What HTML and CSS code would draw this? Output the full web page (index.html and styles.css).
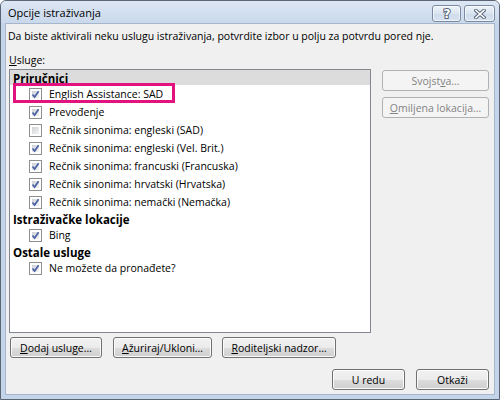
FILE: index.html
```html
<!DOCTYPE html>
<html lang="sr-Latn">
<head>
<meta charset="utf-8">
<title>Opcije istraživanja</title>
<link rel="stylesheet" href="styles.css">
</head>
<body>
<div class="window">
  <div class="titlebar">
    <span class="title">Opcije istraživanja</span>
    <div class="caption-buttons">
      <button class="caption-btn help" type="button" aria-label="Pomoć">
        <svg width="12" height="13" viewBox="0 0 12 13"><text x="6" y="11" text-anchor="middle" class="help-glyph">?</text></svg>
      </button>
      <button class="caption-btn close" type="button" aria-label="Zatvori">
        <svg width="12" height="10" viewBox="0 0 12 10">
          <path d="M2 1.5 L10 8.5 M10 1.5 L2 8.5" class="x-outline"/>
          <path d="M2 1.5 L10 8.5 M10 1.5 L2 8.5" class="x-fill"/>
        </svg>
      </button>
    </div>
  </div>

  <div class="client">
    <p class="intro">Da biste aktivirali neku uslugu istraživanja, potvrdite izbor u polju za potvrdu pored nje.</p>
    <div class="field-label"><u>U</u>sluge:</div>

    <div class="main-row">
      <div class="listbox">
        <div class="group-head active">Priručnici</div>
        <div class="item"><span class="check on"></span>English Assistance: SAD</div>
        <div class="item"><span class="check on"></span>Prevođenje</div>
        <div class="item"><span class="check"></span>Rečnik sinonima: engleski (SAD)</div>
        <div class="item"><span class="check on"></span>Rečnik sinonima: engleski (Vel. Brit.)</div>
        <div class="item"><span class="check on"></span>Rečnik sinonima: francuski (Francuska)</div>
        <div class="item"><span class="check on"></span>Rečnik sinonima: hrvatski (Hrvatska)</div>
        <div class="item"><span class="check on"></span>Rečnik sinonima: nemački (Nemačka)</div>
        <div class="group-head">Istraživačke lokacije</div>
        <div class="item"><span class="check on"></span>Bing</div>
        <div class="group-head">Ostale usluge</div>
        <div class="item"><span class="check on"></span>Ne možete da pronađete?</div>
        <div class="callout"></div>
      </div>

      <div class="side-buttons">
        <button class="btn side" type="button" disabled>Svojst<u>v</u>a…</button>
        <button class="btn side" type="button" disabled><u>O</u>miljena lokacija…</button>
      </div>
    </div>

    <div class="service-buttons">
      <button class="btn add" type="button"><u>D</u>odaj usluge…</button>
      <button class="btn update" type="button"><u>A</u>žuriraj/Ukloni…</button>
      <button class="btn parental" type="button"><u>R</u>oditeljski nadzor…</button>
    </div>

    <div class="dialog-buttons">
      <button class="btn dlg" type="button">U redu</button>
      <button class="btn dlg" type="button">Otkaži</button>
    </div>
  </div>
</div>
</body>
</html>
```

FILE: styles.css
```css
* {
  box-sizing: border-box;
}

html,
body {
  margin: 0;
  padding: 0;
}

body {
  width: 500px;
  height: 400px;
  overflow: hidden;
  font-family: "Open Sans", "Liberation Sans", sans-serif;
  font-size: 10.5px;
  color: #000;
  background: #fff;
}

/* Window frame */
.window {
  width: 500px;
  height: 400px;
  display: flex;
  flex-direction: column;
  border: 1px solid #5c6573;
  border-radius: 6px 6px 0 0;
  background: #c5d5e9;
  padding: 0 4px 4px 4px;
}

.titlebar {
  height: 22px;
  flex: none;
  margin: 0 -4px;
  padding: 0 4px 0 7px;
  display: flex;
  align-items: flex-start;
  justify-content: space-between;
  background: linear-gradient(#dde7f4, #c9d8eb);
  border-radius: 5px 5px 0 0;
}

.title {
  padding-top: 4px;
  font-size: 11px;
  color: #000;
}

.caption-buttons {
  display: flex;
  gap: 3px;
  padding-top: 4px;
}

.caption-btn {
  height: 17px;
  padding: 0;
  border: 1px solid #7a8aa2;
  border-radius: 3px;
  background: linear-gradient(#eef3f9, #dbe5f1 50%, #cfdcec 51%, #d8e3f0);
  display: flex;
  align-items: center;
  justify-content: center;
  box-shadow: inset 0 0 0 1px rgba(255, 255, 255, 0.6);
}

.caption-btn.help {
  width: 29px;
}

.caption-btn.close {
  width: 31px;
}

.help-glyph {
  font-family: "DejaVu Sans", sans-serif;
  font-weight: bold;
  font-size: 12px;
  fill: #fff;
  stroke: #5a677b;
  stroke-width: 2px;
  paint-order: stroke;
}

.x-outline {
  stroke: #5a677b;
  stroke-width: 3.6;
  stroke-linecap: square;
  fill: none;
}

.x-fill {
  stroke: #fff;
  stroke-width: 1.6;
  stroke-linecap: square;
  fill: none;
}

/* Client area */
.client {
  flex: 1;
  border: 1px solid #a7b6ca;
  background: #f0f0f0;
  padding: 4px 5px 0 3px;
  display: flex;
  flex-direction: column;
}

.intro {
  margin: 0 0 0 -1px;
  line-height: 16px;
  height: 16px;
  white-space: nowrap;
}

.field-label {
  margin-top: 8px;
  line-height: 16px;
  height: 16px;
}

.main-row {
  margin-top: 1px;
  display: flex;
  align-items: flex-start;
}

/* Services list */
.listbox {
  position: relative;
  width: 362px;
  height: 264px;
  border: 1px solid #828790;
  background: #fff;
}

.group-head {
  height: 15px;
  line-height: 15px;
  padding: 1px 0 0 3px;
  font-weight: bold;
  font-size: 11.5px;
  white-space: nowrap;
}

.group-head.active {
  background: #dcdcdc;
}

.item {
  height: 18px;
  display: flex;
  align-items: center;
  padding-left: 19px;
  white-space: nowrap;
}

.check {
  width: 13px;
  height: 13px;
  margin-right: 7px;
  flex: none;
  border: 1px solid #8f8f8f;
  background: #fff;
  position: relative;
}

.check::before {
  content: "";
  position: absolute;
  inset: 2px;
  background: linear-gradient(135deg, #cfd2d6, #f4f4f4);
}

.check.on::after {
  content: "";
  position: absolute;
  left: 1px;
  top: 1px;
  width: 9px;
  height: 9px;
  background: no-repeat center / 9px 9px
    url("data:image/svg+xml,%3Csvg xmlns='http://www.w3.org/2000/svg' viewBox='0 0 9 9'%3E%3Cpath d='M1.5 4.5 L3.6 7 L7.6 1.3' fill='none' stroke='%234a61a6' stroke-width='1.7'/%3E%3C/svg%3E");
}

/* Highlight frame around the first service */
.callout {
  position: absolute;
  left: 3px;
  top: 13px;
  width: 162px;
  height: 20px;
  border: 3px solid #e2137f;
  pointer-events: none;
}

/* Buttons */
.btn {
  height: 21px;
  padding: 0;
  font: inherit;
  color: #000;
  text-align: center;
  border: 1px solid #707070;
  border-radius: 3px;
  background: linear-gradient(#f2f2f2 0%, #ebebeb 50%, #dddddd 51%, #cfcfcf 100%);
  box-shadow: inset 0 0 0 1px #fbfbfb;
}

.btn:disabled {
  color: #838383;
  border-color: #adb2b5;
  background: #f4f4f4;
  box-shadow: none;
}

.side-buttons {
  margin-left: 11px;
  margin-top: 1px;
  display: flex;
  flex-direction: column;
  gap: 6px;
}

.btn.side {
  width: 107px;
}

.service-buttons {
  margin-top: 4px;
  padding-left: 1px;
  display: flex;
  gap: 11px;
}

.btn.add {
  width: 92px;
}

.btn.update {
  width: 99px;
  margin-right: -1px;
}

.btn.parental {
  width: 114px;
}

.dialog-buttons {
  margin-top: 11px;
  display: flex;
  justify-content: flex-end;
  gap: 11px;
}

.btn.dlg {
  width: 73px;
}
```
